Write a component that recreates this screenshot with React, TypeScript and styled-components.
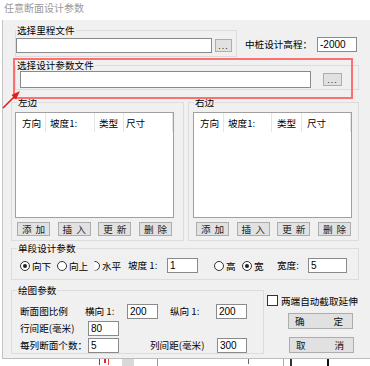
import React from "react";
import styled, { createGlobalStyle } from "styled-components";

const GlobalStyle = createGlobalStyle`
  html, body { margin: 0; padding: 0; background: #fff; }
  body {
    font-family: "Noto Sans CJK SC", "Noto Sans", sans-serif;
    font-size: 9.6px;
    color: #000;
  }
  * { box-sizing: border-box; }
`;

const CJK = `"Noto Sans CJK SC", "Noto Sans", sans-serif`;
const LATIN = `"Liberation Sans", Arial, sans-serif`;

const Window = styled.div`
  position: relative;
  width: 370px;
  height: 366px;
  overflow: hidden;
  background: #fff;
  display: flex;
  flex-direction: column;
`;

const TitleBar = styled.div`
  height: 20px;
  flex: none;
  padding: 3px 0 0 4px;
  font-size: 10px;
  line-height: 10px;
  color: #9a9a9a;
`;

const Body = styled.div`
  height: 339px;
  flex: none;
  margin-left: 2px;
  padding-top: 5px;
  border-left: 1px solid #c4c4c4;
  border-bottom: 1px solid #bdbdbd;
  background: #f0f0f0;
  display: flex;
  flex-direction: column;
`;

const Row = styled.div<{ $mt?: number; $ml?: number; $align?: string }>`
  display: flex;
  align-items: ${(p) => p.$align ?? "flex-start"};
  margin-top: ${(p) => p.$mt ?? 0}px;
  margin-left: ${(p) => p.$ml ?? 0}px;
`;

const Column = styled.div<{ $ml?: number; $pt?: number }>`
  display: flex;
  flex-direction: column;
  margin-left: ${(p) => p.$ml ?? 0}px;
  padding-top: ${(p) => p.$pt ?? 0}px;
`;

const Group = styled.fieldset<{ $w: number; $pad: string }>`
  margin: 0;
  padding: ${(p) => p.$pad};
  width: ${(p) => p.$w}px;
  min-width: 0;
  flex: none;
  border: 1px solid #dcdcdc;
  font-family: ${CJK};
`;

const Legend = styled.legend<{ $ml?: number }>`
  margin-left: ${(p) => p.$ml ?? 0}px;
  padding: 0 1px;
  height: 10px;
  font-size: 9.6px;
  line-height: 10px;
  white-space: nowrap;
`;

const TextBox = styled.input<{ $w: number; $h: number; $ml?: number; $mt?: number }>`
  display: block;
  flex: none;
  width: ${(p) => p.$w}px;
  height: ${(p) => p.$h}px;
  margin: ${(p) => p.$mt ?? 0}px 0 0 ${(p) => p.$ml ?? 0}px;
  padding: 0 2px;
  border: 1px solid #8a8a8a;
  border-radius: 0;
  background: #fff;
  font-family: ${LATIN};
  font-size: 10px;
  color: #000;
  outline: none;
`;

const DotsButton = styled.div<{ $w: number; $ml: number }>`
  flex: none;
  width: ${(p) => p.$w}px;
  height: 13px;
  margin-left: ${(p) => p.$ml}px;
  background: #e1e1e1;
  border: 1px solid #adadad;
  display: flex;
  align-items: flex-end;
  justify-content: center;
  padding-bottom: 2px;
  font-family: ${LATIN};
  font-size: 9px;
  line-height: 6px;
  letter-spacing: 1px;
  color: #222;
`;

const Label = styled.div<{ $w?: number; $ml?: number; $mt?: number; $h?: number }>`
  flex: none;
  width: ${(p) => (p.$w ? `${p.$w}px` : "auto")};
  height: ${(p) => p.$h ?? 10}px;
  line-height: ${(p) => p.$h ?? 10}px;
  margin-left: ${(p) => p.$ml ?? 0}px;
  margin-top: ${(p) => p.$mt ?? 0}px;
  font-family: ${CJK};
  font-size: 9.6px;
  white-space: nowrap;
`;

const ListView = styled.div`
  width: 159px;
  height: 106px;
  background: #fff;
  border: 1px solid #a0a0a0;
`;

const ListHeader = styled.div<{ $cols: string }>`
  display: grid;
  grid-template-columns: ${(p) => p.$cols};
  height: 19px;
`;

const HeaderCell = styled.div<{ $pl: number }>`
  display: flex;
  align-items: center;
  padding-left: ${(p) => p.$pl}px;
  border-right: 1px solid #e5e5e5;
  font-size: 9.6px;
  white-space: nowrap;
  overflow: hidden;
`;

const ButtonRow = styled.div<{ $ml: number }>`
  display: flex;
  justify-content: space-between;
  width: 155px;
  margin: 4px 0 0 ${(p) => p.$ml}px;
`;

const SmallButton = styled.div`
  width: 33px;
  height: 14px;
  background: #e1e1e1;
  border: 1px solid #adadad;
  display: flex;
  align-items: center;
  justify-content: center;
  gap: 4px;
  font-size: 9.6px;
  line-height: 10px;
  color: #222;
`;

const WideButton = styled.div<{ $ml: number; $mt: number }>`
  width: 65px;
  height: 16px;
  margin: ${(p) => p.$mt}px 0 0 ${(p) => p.$ml}px;
  background: #e1e1e1;
  border: 1px solid #adadad;
  display: flex;
  align-items: center;
  justify-content: space-between;
  padding: 0 9px 0 6px;
  font-size: 9.6px;
  line-height: 10px;
  color: #111;
`;

const RadioItem = styled.div<{ $w: number; $ml?: number }>`
  flex: none;
  display: flex;
  align-items: center;
  gap: 2px;
  width: ${(p) => p.$w}px;
  height: 15px;
  margin-left: ${(p) => p.$ml ?? 0}px;
  font-size: 9.6px;
  white-space: nowrap;
`;

const RadioCircle = styled.span<{ $on?: boolean; $clip?: boolean }>`
  position: relative;
  flex: none;
  width: 10px;
  height: 10px;
  border-radius: 50%;
  border: 1px solid #333;
  background: #fff;
  ${(p) => (p.$clip ? "clip-path: inset(0 0 0 45%);" : "")}
  &::after {
    content: "";
    position: absolute;
    inset: 2px;
    border-radius: 50%;
    background: #222;
    display: ${(p) => (p.$on ? "block" : "none")};
  }
`;

const CheckRow = styled.div`
  display: flex;
  align-items: center;
  gap: 3px;
  height: 11px;
  margin-top: 10px;
  font-size: 9.6px;
  white-space: nowrap;
`;

const CheckBox = styled.span`
  flex: none;
  width: 11px;
  height: 11px;
  border: 1px solid #333;
  background: #fff;
`;

const FieldRows = styled.div`
  display: flex;
  flex-direction: column;
  gap: 2px;
`;

const FieldRow = styled.div`
  display: flex;
  align-items: center;
  height: 15px;
`;

const RedFrame = styled.div`
  position: absolute;
  left: 13px;
  top: 58px;
  width: 340px;
  height: 41px;
  border: 2px solid #ff6f6f;
  pointer-events: none;
`;

const Arrow = styled.svg`
  position: absolute;
  left: 0;
  top: 88px;
`;

const BottomStrip = styled.div`
  position: relative;
  flex: 1;
  display: flex;
  align-items: flex-start;
  background: #fff;
`;

const Mark = styled.span<{ $ml: number; $w: number; $h: number; $c: string }>`
  flex: none;
  margin-left: ${(p) => p.$ml}px;
  width: ${(p) => p.$w}px;
  height: ${(p) => p.$h}px;
  background: ${(p) => p.$c};
`;

const SpacedText: React.FC<{ text: string }> = ({ text }) => (
  <>
    {text.split("").map((c, i) => (
      <span key={i}>{c}</span>
    ))}
  </>
);

const ListPanel: React.FC<{ cols: string; pads: number[]; btnMl: number }> = ({ cols, pads, btnMl }) => {
  const heads = ["方向", "坡度1:", "类型", "尺寸"];
  const btns = ["添加", "插入", "更新", "删除"];
  return (
    <>
      <ListView>
        <ListHeader $cols={cols}>
          {heads.map((h, i) => (
            <HeaderCell key={h} $pl={pads[i]}>
              {h}
            </HeaderCell>
          ))}
        </ListHeader>
      </ListView>
      <ButtonRow $ml={btnMl}>
        {btns.map((b) => (
          <SmallButton key={b}>
            <SpacedText text={b} />
          </SmallButton>
        ))}
      </ButtonRow>
    </>
  );
};

export default function App() {
  return (
    <>
      <GlobalStyle />
      <Window>
        <TitleBar>任意断面设计参数</TitleBar>
        <Body>
          <Row $ml={12}>
            <Group $w={222} $pad="3px 0 3px 0">
              <Legend>选择里程文件</Legend>
              <Row $align="center">
                <TextBox $w={196} $h={15} readOnly value="" />
                <DotsButton $w={17} $ml={3}>...</DotsButton>
              </Row>
            </Group>
            <Label $w={72} $ml={8} $mt={14}>
              中桩设计高程：
            </Label>
            <TextBox $w={40} $h={15} $mt={12} readOnly value="-2000" />
          </Row>

          <Row $ml={12} $mt={3}>
            <Group $w={344} $pad="1px 0 1px 0">
              <Legend>选择设计参数文件</Legend>
              <Row $align="center">
                <TextBox $w={291} $h={17} $ml={4} readOnly value="" />
                <DotsButton $w={19} $ml={12}>...</DotsButton>
              </Row>
            </Group>
          </Row>

          <Row $ml={8} $mt={7}>
            <Group $w={173} $pad="5px 0 4px 3px">
              <Legend $ml={2}>左边</Legend>
              <ListPanel cols="30px 49px 29px 49px" pads={[6, 4, 4, 2]} btnMl={2} />
            </Group>
            <Group $w={171} $pad="5px 0 4px 4px" style={{ marginLeft: 4 }}>
              <Legend $ml={1}>右边</Legend>
              <ListPanel cols="30px 48px 30px 49px" pads={[6, 4, 5, 5]} btnMl={3} />
            </Group>
          </Row>

          <Row $ml={8} $mt={2}>
            <Group $w={348} $pad="5px 0 6px 3px">
              <Legend $ml={2}>单段设计参数</Legend>
              <Row $align="center">
                <RadioItem $w={37} $ml={5}>
                  <RadioCircle $on />
                  向下
                </RadioItem>
                <RadioItem $w={33}>
                  <RadioCircle />
                  向上
                </RadioItem>
                <RadioItem $w={38}>
                  <RadioCircle $clip />
                  水平
                </RadioItem>
                <Label $w={39} $h={15}>
                  坡度 1:
                </Label>
                <TextBox $w={31} $h={15} readOnly value="1" />
                <RadioItem $w={28} $ml={16}>
                  <RadioCircle />高
                </RadioItem>
                <RadioItem $w={35}>
                  <RadioCircle $on />宽
                </RadioItem>
                <Label $w={31} $h={15}>
                  宽度:
                </Label>
                <TextBox $w={39} $h={15} readOnly value="5" />
              </Row>
            </Group>
          </Row>

          <Row $ml={8} $mt={5}>
            <Group $w={253} $pad="9px 0 0 3px">
              <Legend $ml={2}>绘图参数</Legend>
              <FieldRows>
                <FieldRow>
                  <Label $w={65} $ml={5} $h={15}>
                    断面图比例
                  </Label>
                  <Label $w={42} $h={15}>
                    横向 1:
                  </Label>
                  <TextBox $w={31} $h={15} readOnly value="200" />
                  <Label $w={46} $ml={12} $h={15}>
                    纵向 1:
                  </Label>
                  <TextBox $w={31} $h={15} readOnly value="200" />
                </FieldRow>
                <FieldRow>
                  <Label $w={68} $ml={5} $h={15}>
                    行间距(毫米)
                  </Label>
                  <TextBox $w={31} $h={15} readOnly value="80" />
                </FieldRow>
                <FieldRow>
                  <Label $w={68} $ml={5} $h={15}>
                    每列断面个数：
                  </Label>
                  <TextBox $w={31} $h={15} readOnly value="5" />
                  <Label $w={67} $ml={31} $h={15}>
                    列间距(毫米)
                  </Label>
                  <TextBox $w={30} $h={15} readOnly value="300" />
                </FieldRow>
              </FieldRows>
            </Group>
            <Column $ml={3}>
              <CheckRow>
                <CheckBox />
                两端自动截取延伸
              </CheckRow>
              <WideButton $ml={21} $mt={7}>
                <span>确</span>
                <span>定</span>
              </WideButton>
              <WideButton $ml={22} $mt={8}>
                <span>取</span>
                <span>消</span>
              </WideButton>
            </Column>
          </Row>
        </Body>
        <BottomStrip>
          <Mark $ml={99} $w={1} $h={6} $c="#555" />
          <Mark $ml={4} $w={2} $h={4} $c="#e22" />
          <Mark $ml={2} $w={1} $h={6} $c="#e44" />
          <Mark $ml={13} $w={12} $h={7} $c="#d8d8d8" />
          <Mark $ml={23} $w={1} $h={7} $c="#999" />
          <Mark $ml={90} $w={1} $h={5} $c="#666" />
          <Mark $ml={34} $w={1} $h={7} $c="#aaa" />
          <Mark $ml={6} $w={2} $h={7} $c="#333" />
          <Mark $ml={35} $w={2} $h={7} $c="#111" />
        </BottomStrip>

        <RedFrame />
        <Arrow width="24" height="24" viewBox="0 0 24 24">
          <line x1="3" y1="20" x2="16" y2="7" stroke="#e51c1c" strokeWidth="1.6" />
          <polygon points="20,3 11.5,7 16,11.5" fill="#e51c1c" />
        </Arrow>
      </Window>
    </>
  );
}
